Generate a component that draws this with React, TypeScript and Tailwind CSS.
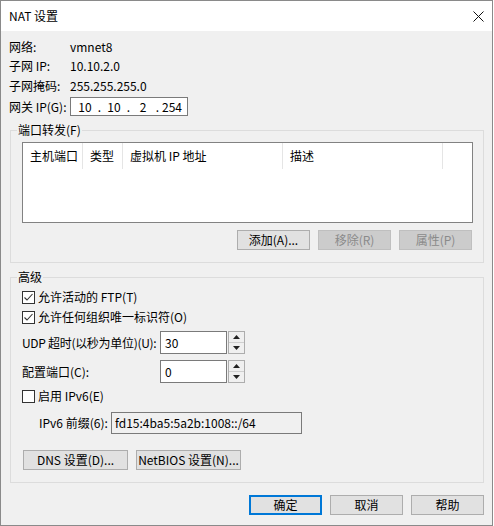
import React from "react";

const font = "font-['Noto_Sans_CJK_SC','Noto_Sans',sans-serif]";

function Btn({
  children,
  w = "w-[73px]",
  disabled,
  primary,
}: {
  children: React.ReactNode;
  w?: string;
  disabled?: boolean;
  primary?: boolean;
}) {
  let cls = "bg-[#e1e1e1] border border-[#adadad] text-black";
  if (disabled) cls = "bg-[#cccccc] border border-[#bfbfbf] text-[#8a8a8a]";
  if (primary) cls = "bg-[#e1e1e1] border-2 border-[#0078d7] text-black";
  return (
    <div className={`${w} h-[20px] flex items-center justify-center whitespace-nowrap ${cls}`}>{children}</div>
  );
}

function Check({ checked, label }: { checked?: boolean; label: string }) {
  return (
    <div className="h-[20px] flex items-center ml-[11px]">
      <div className="w-[13px] h-[13px] border border-[#333333] bg-white flex items-center justify-center">
        {checked && (
          <svg width="11" height="11" viewBox="0 0 11 11">
            <path d="M1.5 5.5 L4 8 L9.5 2" fill="none" stroke="#333333" strokeWidth="1.1" />
          </svg>
        )}
      </div>
      <span className="ml-[3px] whitespace-nowrap">{label}</span>
    </div>
  );
}

function Spin({ value }: { value: string }) {
  return (
    <div className="flex h-[23px]">
      <div className="w-[67px] h-full bg-white border border-[#7a7a7a] pl-[4px] flex items-center">
        {value}
      </div>
      <div className="ml-[1px] w-[17px] h-full border border-[#adadad] bg-[#f0f0f0] flex flex-col">
        <div className="flex-1 flex items-center justify-center border-b border-[#cfcfcf]">
          <svg width="7" height="4" viewBox="0 0 7 4">
            <path d="M0 4 L3.5 0 L7 4 Z" fill="#222" />
          </svg>
        </div>
        <div className="flex-1 flex items-center justify-center">
          <svg width="7" height="4" viewBox="0 0 7 4">
            <path d="M0 0 L3.5 4 L7 0 Z" fill="#222" />
          </svg>
        </div>
      </div>
    </div>
  );
}

export default function App() {
  const info = [
    ["网络:", "vmnet8"],
    ["子网 IP:", "10.10.2.0"],
    ["子网掩码:", "255.255.255.0"],
  ];
  const cols = [
    ["主机端口", "w-[60px]"],
    ["类型", "w-[40px]"],
    ["虚拟机 IP 地址", "w-[160px]"],
    ["描述", "w-[160px]"],
  ];

  return (
    <div
      className={`${font} text-[12px] leading-[16px] text-black w-[493px] h-[526px] border border-[#8a8a8a] bg-[#f0f0f0] flex flex-col`}
    >
      <div className="h-[30px] bg-white flex items-center justify-between pl-[8px] pr-[8px]">
        <span className="text-[12px]">NAT 设置</span>
        <svg width="11" height="11" viewBox="0 0 11 11">
          <path d="M0.5 0.5 L10.5 10.5 M10.5 0.5 L0.5 10.5" stroke="#111" strokeWidth="1" />
        </svg>
      </div>

      <div className="pl-[8px] mt-[6px] flex flex-col">
        {info.map(([k, v], i) => (
          <div key={k} className={`${i === 0 ? "h-[19px]" : "h-[20px]"} flex items-center`}>
            <span className="w-[61px] whitespace-nowrap">{k}</span>
            <span>{v}</span>
          </div>
        ))}
        <div className="h-[19px] mt-[1px] flex items-center">
          <span className="w-[61px] whitespace-nowrap">网关 IP(G):</span>
          <div className="w-[118px] h-[19px] bg-white border border-[#7a7a7a] flex items-center pl-[3px]">
            {["10", "10", "2", "254"].map((o, i) => (
              <React.Fragment key={i}>
                <span className="w-[22px] text-center">{o}</span>
                {i < 3 && <span className="w-[7px] text-center">.</span>}
              </React.Fragment>
            ))}
          </div>
        </div>
      </div>

      <fieldset className="ml-[9px] w-[474px] mt-[6px] border border-[#dcdcdc] pb-[12px]">
        <legend className="ml-[6px] px-[1px]">端口转发(F)</legend>
        <div className="ml-[11px] mt-[4px] w-[451px] h-[81px] bg-white border border-[#828282]">
          <div className="flex h-[26px]">
            {cols.map(([t, w]) => (
              <div key={t} className={`${w} h-full flex items-center pl-[7px] whitespace-nowrap border-r border-[#e5e5e5]`}>
                {t}
              </div>
            ))}
          </div>
        </div>
        <div className="flex justify-end gap-[8px] mr-[11px] mt-[7px]">
          <Btn>添加(A)...</Btn>
          <Btn disabled>移除(R)</Btn>
          <Btn disabled>属性(P)</Btn>
        </div>
      </fieldset>

      <fieldset className="ml-[9px] w-[474px] mt-[6px] border border-[#dcdcdc] pb-[12px]">
        <legend className="ml-[6px] px-[1px]">高级</legend>
        <div className="mt-[2px]">
          <Check checked label="允许活动的 FTP(T)" />
          <Check checked label="允许任何组织唯一标识符(O)" />
        </div>
        <div className="flex items-center ml-[11px] mt-[4px]">
          <span className="w-[138px] whitespace-nowrap tracking-[-0.3px]">UDP 超时(以秒为单位)(U):</span>
          <Spin value="30" />
        </div>
        <div className="flex items-center ml-[11px] mt-[6px]">
          <span className="w-[138px] whitespace-nowrap">配置端口(C):</span>
          <Spin value="0" />
        </div>
        <div className="mt-[3px]">
          <Check label="启用 IPv6(E)" />
        </div>
        <div className="flex items-center ml-[28px] mt-[6px]">
          <span className="w-[72px] whitespace-nowrap">IPv6 前缀(6):</span>
          <div className="w-[191px] h-[22px] border border-[#7a7a7a] bg-[#f0f0f0] flex items-center pl-[3px]">
            fd15:4ba5:5a2b:1008::/64
          </div>
        </div>
        <div className="flex gap-[8px] ml-[12px] mt-[16px]">
          <Btn w="w-[105px]">DNS 设置(D)...</Btn>
          <Btn w="w-[105px]">NetBIOS 设置(N)...</Btn>
        </div>
      </fieldset>

      <div className="flex justify-end gap-[8px] pr-[8px] mt-[12px]">
        <Btn primary>确定</Btn>
        <Btn>取消</Btn>
        <Btn>帮助</Btn>
      </div>
    </div>
  );
}
